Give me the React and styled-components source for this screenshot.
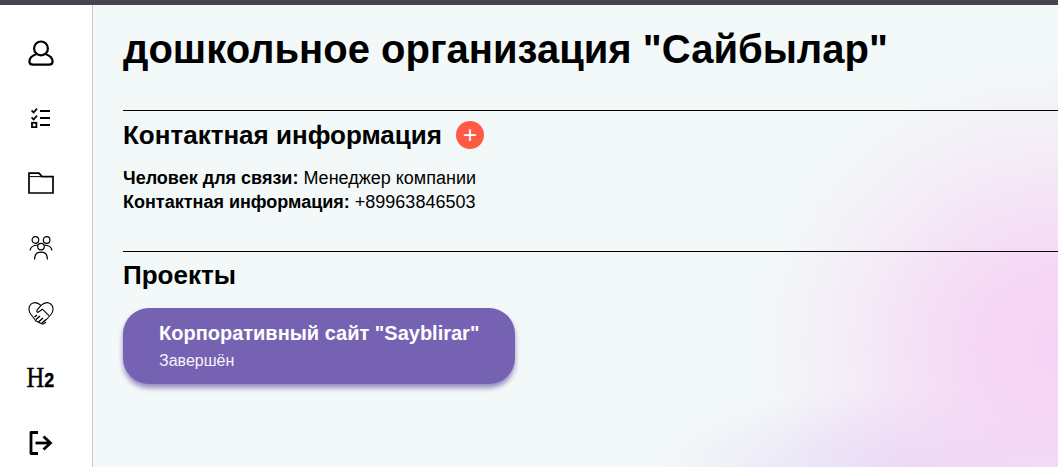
import React from 'react';
import styled, { createGlobalStyle } from 'styled-components';

const GlobalStyle = createGlobalStyle`
    html, body { margin: 0; padding: 0; height: 100%; overflow: hidden; }
    body { font-family: "Liberation Sans", Arial, sans-serif; color: #000; background: #fff; }
`;

const UserIcon = () => (
    <svg width="26" height="26" viewBox="0 0 26 26" fill="none" stroke="#000" strokeWidth="2.2">
        <circle cx="13" cy="8.4" r="6.9" />
        <path d="M8.5 14 C4.5 15.5 1.4 18 1.4 21.5 C1.4 23.5 3 24.6 5 24.6 H21 C23 24.6 24.6 23.5 24.6 21.5 C24.6 18 21.5 15.5 17.5 14" />
    </svg>
);

const TasksIcon = () => (
    <svg width="20" height="20" viewBox="0 0 20 20" fill="none" stroke="#000">
        <path d="M0.5 2.4 L2.6 4.6 L6 0.6" strokeWidth="1.7" />
        <path d="M0.5 9.4 L2.6 11.6 L6 7.6" strokeWidth="1.7" />
        <rect x="1" y="14.8" width="4.4" height="4.4" strokeWidth="1.8" />
        <path d="M9 3 H19 M9 10 H19 M9 17 H19" strokeWidth="2" />
    </svg>
);

const FolderIcon = () => (
    <svg width="26" height="22" viewBox="0 0 26 22" fill="none" stroke="#000">
        <path d="M1 21 V1.2 H11 L14 4.6 H25 V21 Z" strokeWidth="1.7" />
        <path d="M1 4.6 H14" strokeWidth="1" />
    </svg>
);

const PeopleIcon = () => (
    <svg width="24" height="24" viewBox="0 0 24 24" fill="none" stroke="#000" strokeWidth="1.2">
        <circle cx="6.4" cy="4" r="3.3" />
        <circle cx="17.6" cy="4" r="3.3" />
        <circle cx="12" cy="10.6" r="3.3" />
        <path d="M1 14.5 C1.5 11 3.5 9.2 8.8 9" />
        <path d="M23 14.5 C22.5 11 20.5 9.2 15.2 9" />
        <path d="M5.5 23.5 C5.5 18.5 8 16.2 12 16.2 C16 16.2 18.5 18.5 18.5 23.5" />
    </svg>
);

const HandshakeIcon = () => (
    <svg width="26" height="24" viewBox="0 0 26 24" fill="none" stroke="#000" strokeWidth="1.1">
        <path d="M8 20 L3 13.5 C0.2 10 0.4 5.4 3 3.2 C5.8 0.9 9.6 1.4 13 4.4 C16.4 1.4 20.2 0.9 23 3.2 C25.6 5.4 25.8 10 23 13.5 L18 19" />
        <path d="M13 4.4 L9 9.2 C8.2 10.4 9.2 11.6 10.6 11 L14.4 8.2 L21 14.6" />
        <path d="M6.5 16 L9 14 M8 18.5 L12 15 M10.5 21 L15 17 M13.5 22.5 L18 18.5" strokeWidth="1.5" />
        <path d="M7 19.5 L14 23 H15.5 L18 21" />
    </svg>
);

const LogoutIcon = () => (
    <svg width="24" height="24" viewBox="0 0 24 24" fill="none" stroke="#000" strokeWidth="2.8">
        <path d="M9 1.5 H2 V22.5 H9" strokeLinejoin="round" />
        <path d="M6.5 12 H21" />
        <path d="M14.5 5.5 L21.5 12 L14.5 18.5" />
    </svg>
);

const App = () => (
    <Page>
        <GlobalStyle />
        <TopBar />
        <Body>
            <Sidebar>
                <NavItem><UserIcon /></NavItem>
                <NavItem><TasksIcon /></NavItem>
                <NavItem><FolderIcon /></NavItem>
                <NavItem><PeopleIcon /></NavItem>
                <NavItem><HandshakeIcon /></NavItem>
                <NavItem><H2Mark>H<small>2</small></H2Mark></NavItem>
                <NavItem><LogoutIcon /></NavItem>
            </Sidebar>
            <Main>
                <Title>дошкольное организация "Сайбылар"</Title>
                <Section>
                    <SectionHead $gap={15}>
                        <SectionTitle>Контактная информация</SectionTitle>
                        <AddButton>+</AddButton>
                    </SectionHead>
                    <InfoLine><b>Человек для связи:</b> Менеджер компании</InfoLine>
                    <InfoLine><b>Контактная информация:</b> +89963846503</InfoLine>
                </Section>
                <ProjectSection>
                    <SectionHead $gap={17}>
                        <SectionTitle>Проекты</SectionTitle>
                    </SectionHead>
                    <ProjectCard>
                        <ProjectName>Корпоративный сайт "Sayblirar"</ProjectName>
                        <ProjectStatus>Завершён</ProjectStatus>
                    </ProjectCard>
                </ProjectSection>
            </Main>
        </Body>
    </Page>
);

const Page = styled.div`
    height: 467px;
    display: flex;
    flex-direction: column;
    overflow: hidden;
`;

const TopBar = styled.div`
    height: 5px;
    flex: none;
    background: #45444f;
`;

const Body = styled.div`
    flex: 1;
    display: flex;
    min-height: 0;
`;

const Sidebar = styled.nav`
    width: 93px;
    flex: none;
    box-sizing: border-box;
    padding: 15px 11px 0 0;
    background: #fff;
    border-right: 1px solid #c9c9c9;
    display: flex;
    flex-direction: column;
    align-items: center;
`;

const NavItem = styled.div`
    height: 65px;
    flex: none;
    display: flex;
    align-items: center;
    justify-content: center;
`;

const H2Mark = styled.span`
    font-family: "Liberation Serif", serif;
    font-size: 29px;
    line-height: 1;
    color: #000;
    display: inline-block;
    transform: scaleX(0.85);
    -webkit-text-stroke: 0.4px #000;
    small {
        font-family: "Liberation Sans", sans-serif;
        font-size: 21px;
        font-weight: 700;
    }
`;

const Main = styled.main`
    flex: 1;
    min-width: 0;
    box-sizing: border-box;
    padding-left: 30px;
    background:
        radial-gradient(ellipse 300px 280px at 100% 74%,
            rgba(246, 211, 245, 1) 0%,
            rgba(246, 211, 245, 0.9) 25%,
            rgba(246, 211, 245, 0.6) 50%,
            rgba(246, 211, 245, 0.25) 75%,
            rgba(246, 211, 245, 0) 100%),
        radial-gradient(ellipse 250px 80px at 85% 100%,
            rgba(231, 221, 247, 1) 0%,
            rgba(231, 221, 247, 0.5) 55%,
            rgba(231, 221, 247, 0) 100%),
        #f3f8f8;
`;

const Title = styled.h1`
    margin: 0;
    padding-top: 21px;
    font-size: 40px;
    line-height: 46px;
    font-weight: 700;
    height: 83px;
    box-sizing: border-box;
`;

const Section = styled.section`
    border-top: 1px solid #000;
    margin-top: 22px;
    padding-top: 8px;
    height: 141px;
    box-sizing: border-box;
`;

const ProjectSection = styled(Section)`
    margin-top: 0;
    padding-top: 7px;
    height: auto;
`;

const SectionHead = styled.div`
    display: flex;
    align-items: center;
    gap: 14px;
    height: 32px;
    margin-bottom: ${(p) => p.$gap}px;
`;

const SectionTitle = styled.h2`
    margin: 0;
    font-size: 26px;
    line-height: 32px;
    font-weight: 700;
`;

const AddButton = styled.button`
    width: 28px;
    height: 28px;
    padding: 0;
    border: none;
    border-radius: 50%;
    background: #ff5a44;
    color: #fff;
    font-family: "Liberation Sans", sans-serif;
    font-size: 24px;
    line-height: 28px;
    text-align: center;
`;

const InfoLine = styled.div`
    font-size: 18px;
    line-height: 24px;
    b { font-weight: 700; }
`;

const ProjectCard = styled.div`
    width: 392px;
    height: 76px;
    box-sizing: border-box;
    padding: 12px 0 0 36px;
    border-radius: 26px;
    background: #7662b2;
    box-shadow: 0 4px 5px rgba(90, 70, 160, 0.6);
    color: #fff;
`;

const ProjectName = styled.div`
    font-size: 20px;
    line-height: 26px;
    font-weight: 700;
    white-space: nowrap;
`;

const ProjectStatus = styled.div`
    margin-top: 4px;
    font-size: 16px;
    line-height: 22px;
    color: #f5f2fa;
`;

export default App;
